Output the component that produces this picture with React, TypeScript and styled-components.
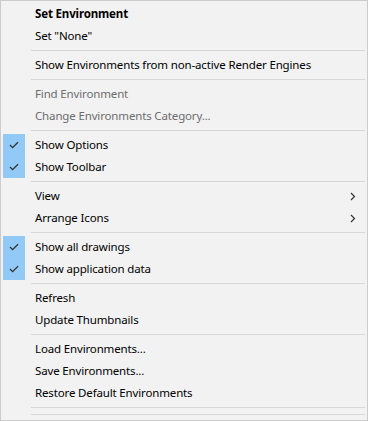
import React from "react";
import styled, { createGlobalStyle } from "styled-components";

type Entry =
  | { kind: "sep" }
  | {
      kind: "item";
      label: string;
      bold?: boolean;
      disabled?: boolean;
      checked?: boolean;
      submenu?: boolean;
    };

const entries: Entry[] = [
  { kind: "item", label: "Set Environment", bold: true },
  { kind: "item", label: 'Set "None"' },
  { kind: "sep" },
  { kind: "item", label: "Show Environments from non-active Render Engines" },
  { kind: "sep" },
  { kind: "item", label: "Find Environment", disabled: true },
  { kind: "item", label: "Change Environments Category...", disabled: true },
  { kind: "sep" },
  { kind: "item", label: "Show Options", checked: true },
  { kind: "item", label: "Show Toolbar", checked: true },
  { kind: "sep" },
  { kind: "item", label: "View", submenu: true },
  { kind: "item", label: "Arrange Icons", submenu: true },
  { kind: "sep" },
  { kind: "item", label: "Show all drawings", checked: true },
  { kind: "item", label: "Show application data", checked: true },
  { kind: "sep" },
  { kind: "item", label: "Refresh" },
  { kind: "item", label: "Update Thumbnails" },
  { kind: "sep" },
  { kind: "item", label: "Load Environments..." },
  { kind: "item", label: "Save Environments..." },
  { kind: "item", label: "Restore Default Environments" },
  { kind: "sep" },
  { kind: "sep" },
];

const GlobalStyle = createGlobalStyle`
  html, body {
    margin: 0;
    padding: 0;
    background: #ffffff;
  }
`;

const Menu = styled.div`
  box-sizing: border-box;
  width: 368px;
  height: 421px;
  padding: 2px;
  border: 1px solid #cccccc;
  background: #f2f2f2;
  font-family: "Noto Sans", "Segoe UI", sans-serif;
  font-size: 11.5px;
  letter-spacing: -0.15px;
  color: #000000;
  display: flex;
  flex-direction: column;
`;

const Row = styled.div<{ $disabled?: boolean; $bold?: boolean }>`
  height: 22px;
  display: flex;
  align-items: center;
  color: ${(p) => (p.$disabled ? "#6d6d6d" : "#000000")};
  font-weight: ${(p) => (p.$bold ? 700 : 400)};
`;

const Gutter = styled.div<{ $checked?: boolean }>`
  width: 22px;
  height: 22px;
  margin-right: 10px;
  display: flex;
  align-items: center;
  justify-content: center;
  background: ${(p) => (p.$checked ? "#91c9f7" : "transparent")};
`;

const Label = styled.span`
  flex: 1;
  white-space: nowrap;
  padding-bottom: 2px;
`;

const Arrow = styled.div`
  width: 20px;
  display: flex;
  align-items: center;
  justify-content: center;
  margin-right: 2px;
`;

const Separator = styled.div`
  height: 7px;
  display: flex;
  align-items: center;
  padding-left: 28px;

  &::after {
    content: "";
    flex: 1;
    height: 1px;
    background: #d7d7d7;
  }
`;

function Check() {
  return (
    <svg width="10" height="8" viewBox="0 0 10 8">
      <path d="M1 4 L3.6 6.6 L9 1.2" fill="none" stroke="#333333" strokeWidth="1.3" />
    </svg>
  );
}

function Chevron() {
  return (
    <svg width="6" height="9" viewBox="0 0 6 9">
      <path d="M1 1 L4.5 4.5 L1 8" fill="none" stroke="#333333" strokeWidth="1.2" />
    </svg>
  );
}

export default function App() {
  return (
    <>
      <GlobalStyle />
      <Menu>
        {entries.map((e, i) =>
          e.kind === "sep" ? (
            <Separator key={i} />
          ) : (
            <Row key={i} $disabled={e.disabled} $bold={e.bold}>
              <Gutter $checked={e.checked}>{e.checked && <Check />}</Gutter>
              <Label>{e.label}</Label>
              {e.submenu && (
                <Arrow>
                  <Chevron />
                </Arrow>
              )}
            </Row>
          )
        )}
      </Menu>
    </>
  );
}
